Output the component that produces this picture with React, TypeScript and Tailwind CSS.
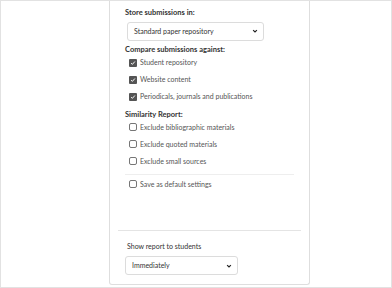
import React from "react";

function Checkbox({ checked }: { checked?: boolean }) {
  return checked ? (
    <span className="flex h-[8px] w-[8px] shrink-0 items-center justify-center rounded-[1px] bg-[#555]">
      <svg viewBox="0 0 8 8" className="h-[6px] w-[6px]">
        <path d="M1.5 4.2 L3.2 5.8 L6.5 2" fill="none" stroke="#fff" strokeWidth="1.3" />
      </svg>
    </span>
  ) : (
    <span className="h-[8px] w-[8px] shrink-0 rounded-[2px] border border-[#767676] bg-white" />
  );
}

function Row({ checked, label }: { checked?: boolean; label: string }) {
  return (
    <div className="flex h-[17px] items-center gap-[3px] pl-[4px] text-[7px] text-[#555]">
      <Checkbox checked={checked} />
      <span>{label}</span>
    </div>
  );
}

function Select({ value, w }: { value: string; w: string }) {
  return (
    <div
      className={`flex h-[19px] items-center justify-between rounded-[3px] border border-[#dcdcdc] bg-white pl-[6px] pr-[5px] text-[7px] text-[#333] ${w}`}
    >
      <span>{value}</span>
      <svg viewBox="0 0 8 8" className="h-[6px] w-[6px]">
        <path d="M1.5 2.8 L4 5.2 L6.5 2.8" fill="none" stroke="#222" strokeWidth="1.6" />
      </svg>
    </div>
  );
}

export default function App() {
  return (
    <div
      className="h-[288px] w-[392px] overflow-hidden border border-[#e2e2e2] bg-white text-[7.5px] leading-none"
      style={{ fontFamily: "Lato, 'Open Sans', sans-serif" }}
    >
      <div className="ml-[108px] flex h-[284px] w-[201px] flex-col rounded-b-[3px] border-x border-b border-[#dedede] px-[8px]">
        <div className="flex flex-col px-[7px] pt-[8px]">
          <div className="font-bold text-[#333]">Store submissions in:</div>
          <div className="mt-[5px] pl-[2px]">
            <Select value="Standard paper repository" w="w-[137px]" />
          </div>
          <div className="mt-[5px] font-bold text-[#333]">Compare submissions against:</div>
          <div className="mt-[1px]">
            <Row checked label="Student repository" />
            <Row checked label="Website content" />
            <Row checked label="Periodicals, journals and publications" />
          </div>
          <div className="mt-[6px] font-bold text-[#333]">Similarity Report:</div>
          <div>
            <Row label="Exclude bibliographic materials" />
            <Row label="Exclude quoted materials" />
            <Row label="Exclude small sources" />
          </div>
          <div className="mt-[4px] border-t border-[#eeeeee]" />
          <div className="mt-[1px]">
            <Row label="Save as default settings" />
          </div>
        </div>
        <div className="mt-auto border-t border-[#e4e4e4] pb-[9px] pl-[7px] pr-[9px] pt-[12px]">
          <div className="pl-[2px] text-[7px] text-[#333]">Show report to students</div>
          <div className="mt-[6px]">
            <Select value="Immediately" w="w-[113px]" />
          </div>
        </div>
      </div>
    </div>
  );
}
